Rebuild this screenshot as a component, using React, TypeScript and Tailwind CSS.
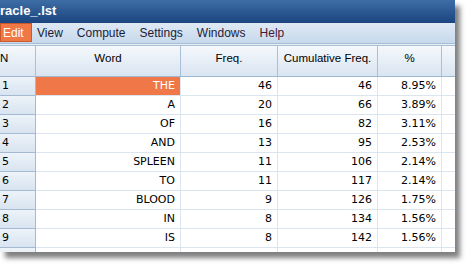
import React from 'react';

const rows = [
    { word: 'THE', freq: 46, cum: 46, pct: '8.95%' },
    { word: 'A', freq: 20, cum: 66, pct: '3.89%' },
    { word: 'OF', freq: 16, cum: 82, pct: '3.11%' },
    { word: 'AND', freq: 13, cum: 95, pct: '2.53%' },
    { word: 'SPLEEN', freq: 11, cum: 106, pct: '2.14%' },
    { word: 'TO', freq: 11, cum: 117, pct: '2.14%' },
    { word: 'BLOOD', freq: 9, cum: 126, pct: '1.75%' },
    { word: 'IN', freq: 8, cum: 134, pct: '1.56%' },
    { word: 'IS', freq: 8, cum: 142, pct: '1.56%' },
];

const menus = ['View', 'Compute', 'Settings', 'Windows'];

const cell = 'h-full flex items-center justify-end pr-[5px] border-r border-b border-[#dbe5ef]';

export default function App() {
    return (
        <div className="w-[469px] h-[267px] bg-white overflow-hidden">
            <div className="w-[455px] h-[252px] flex flex-col overflow-hidden bg-white shadow-[5px_6px_5px_rgba(0,0,0,0.5)] font-['Liberation_Sans',sans-serif]">
                {/* title */}
                <div className="h-[23px] shrink-0 bg-gradient-to-b from-[#3e6da5] to-[#1b457f] text-white font-bold text-[13px] leading-none pt-[4px]">
                    racle_.lst
                </div>

                {/* menu */}
                <div className="h-[20px] shrink-0 flex items-stretch gap-[14px] bg-gradient-to-b from-[#dfe9f4] to-[#c6d9ec] text-[12px] text-[#1c1c38]">
                    <div className="w-[32px] h-[19px] flex items-center pl-[2px] mr-[-9px] bg-[#ef7846] border border-[#c9582c] text-white">Edit</div>
                    {menus.map((m) => (
                        <div key={m} className="flex items-center">{m}</div>
                    ))}
                    <div className="flex items-center text-[#4a1834]">Help</div>
                </div>
                <div className="h-[3px] shrink-0 border-t border-b border-[#a8bfd6] bg-[#e6eef7]" />

                {/* header */}
                <div className="h-[31px] shrink-0 flex text-[11.5px] text-black bg-gradient-to-b from-[#f5f8fc] to-[#d9e5f1] border-b border-[#9fb7cf]">
                    <div className="w-[36px] pt-[4px] border-r border-[#a9c0d8]">N</div>
                    <div className="w-[145px] pt-[4px] text-center border-r border-[#a9c0d8]">Word</div>
                    <div className="w-[97px] pt-[4px] text-center border-r border-[#a9c0d8]">Freq.</div>
                    <div className="w-[100px] pt-[4px] text-center border-r border-[#a9c0d8]">Cumulative Freq.</div>
                    <div className="w-[64px] pt-[4px] text-center border-r border-[#a9c0d8]">%</div>
                    <div className="flex-1" />
                </div>

                {/* rows */}
                <div className="flex-1 overflow-hidden font-['DejaVu_Sans',sans-serif] text-[11px] text-black">
                    {[...rows, null].map((r, i) => (
                        <div key={i} className="h-[19px] flex">
                            <div className="w-[36px] h-full flex items-center pl-[2px] bg-gradient-to-b from-[#edf3f9] to-[#d8e4f0] border-r border-b border-[#a3bad2]">
                                {r ? i + 1 : ''}
                            </div>
                            <div className={`w-[145px] ${cell} ${i === 0 ? 'bg-[#f07848] text-white' : ''}`}>{r?.word}</div>
                            <div className={`w-[97px] ${cell}`}>{r?.freq}</div>
                            <div className={`w-[100px] ${cell}`}>{r?.cum}</div>
                            <div className={`w-[64px] ${cell}`}>{r?.pct}</div>
                            <div className="flex-1 h-full border-b border-[#dbe5ef]" />
                        </div>
                    ))}
                </div>
            </div>
        </div>
    );
}
